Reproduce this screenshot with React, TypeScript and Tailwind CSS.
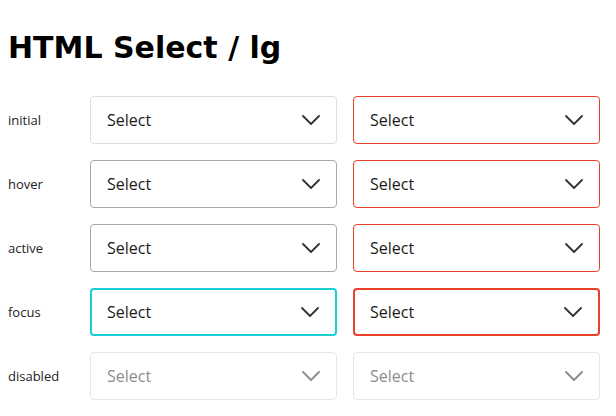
import React from "react";

type Variant = {
  border: string;
  text: string;
  chevron: string;
};

const rows: { label: string; normal: Variant; error: Variant }[] = [
  {
    label: "initial",
    normal: { border: "border border-[#dedede] pl-4", text: "text-[#1a1a1a]", chevron: "#333333" },
    error: { border: "border border-[#e8402a] pl-4", text: "text-[#1a1a1a]", chevron: "#333333" },
  },
  {
    label: "hover",
    normal: { border: "border border-[#a8a8a8] pl-4", text: "text-[#1a1a1a]", chevron: "#333333" },
    error: { border: "border border-[#e8402a] pl-4", text: "text-[#1a1a1a]", chevron: "#333333" },
  },
  {
    label: "active",
    normal: { border: "border border-[#a8a8a8] pl-4", text: "text-[#1a1a1a]", chevron: "#333333" },
    error: { border: "border border-[#e8402a] pl-4", text: "text-[#1a1a1a]", chevron: "#333333" },
  },
  {
    label: "focus",
    normal: { border: "border-2 border-[#19cfd3] pl-[15px]", text: "text-[#1a1a1a]", chevron: "#333333" },
    error: { border: "border-2 border-[#e8402a] pl-[15px]", text: "text-[#1a1a1a]", chevron: "#333333" },
  },
  {
    label: "disabled",
    normal: { border: "border border-[#e6e6e6] pl-4", text: "text-[#8c8c8c]", chevron: "#8c8c8c" },
    error: { border: "border border-[#e6e6e6] pl-4", text: "text-[#8c8c8c]", chevron: "#8c8c8c" },
  },
];

const Chevron = ({ color }: { color: string }) => (
  <svg width="18" height="10" viewBox="0 0 18 10" fill="none">
    <path d="M1 1l8 8 8-8" stroke={color} strokeWidth="1.8" strokeLinecap="round" strokeLinejoin="round" />
  </svg>
);

const SelectBox = ({ v }: { v: Variant }) => (
  <div
    className={`w-[247px] h-[48px] rounded-[4px] bg-white flex items-center justify-between pr-4 ${v.border}`}
  >
    <span className={`text-[16px] ${v.text}`}>Select</span>
    <Chevron color={v.chevron} />
  </div>
);

export default function App() {
  return (
    <div className="min-h-screen bg-white px-2 pt-[26px] font-['Open_Sans',sans-serif]">
      <h1 className="font-['DejaVu_Sans',sans-serif] text-[30px] leading-[44px] font-bold text-black mb-[26px]">
        HTML Select / lg
      </h1>
      <div className="flex flex-col gap-4">
        {rows.map(row => (
          <div key={row.label} className="flex items-center">
            <div className="w-[82px] pt-[2px] text-[13px] text-[#222222]">{row.label}</div>
            <div className="flex gap-4">
              <SelectBox v={row.normal} />
              <SelectBox v={row.error} />
            </div>
          </div>
        ))}
      </div>
    </div>
  );
}
